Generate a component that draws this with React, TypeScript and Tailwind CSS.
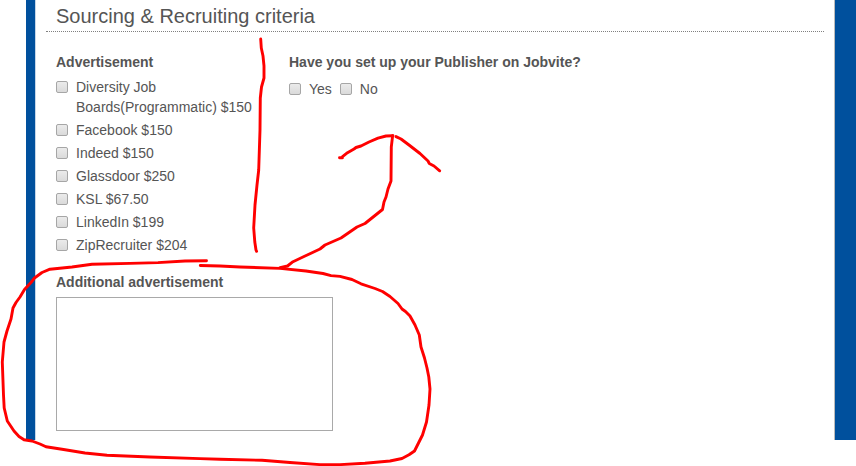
type CheckOptionProps = {
  label: string;
};

const boards = [
  "Diversity Job Boards(Programmatic) $150",
  "Facebook $150",
  "Indeed $150",
  "Glassdoor $250",
  "KSL $67.50",
  "LinkedIn $199",
  "ZipRecruiter $204",
];

const strokes = [
  // divider between the two columns
  "M260.7 39 L261.3 48 L263 56 L264 66 L264 78 L261.5 87 L260.3 98 L260 130 L258.7 170 L257 185 L255 205 L253.7 228 L254.8 242 L256 250 L256.6 251.3",
  // loop around the additional advertisement field
  "M206.5 260.8 L185 261 L158 262.6 L130 263.4 L92 264.3 L72 267 L50 269.2 L42 272.5 L34.5 278 L31 282.5 L24.5 289.5 L20 297 L16 302.5 L13 308 L11 319 L7 331 L4 342 L2.3 362 L3.5 395 L4.2 408 L7.3 421 L14 431 L19 436.5 L24 439.8 L32 441 L40 444 L46 446.8 L62 449.3 L85 453 L107 455.3 L150 457 L200 458.6 L220 459.2 L262 460.3 L290 462.5 L320 464.6 L340 464.6 L365 463.3 L390 461 L402 458.5 L409 454.8 L414.5 451 L418.5 443 L422.5 435 L426.5 422 L429 405 L430 389 L428.8 377 L427 368 L424.5 358 L421 347 L419.3 335 L415 325 L410 316 L405.5 311.5 L402 309 L398 303.5 L390 296.5 L382.5 291.5 L375 288.5 L361 283.8 L352 279.5 L340 276.4 L331 275.6 L323 273.5 L306 271 L280 268.4 L240 267 L220 266 L200.3 265.5",
  // arrow shaft
  "M280 267.7 L287.5 266 L293 261.7 L304 256.5 L320 249 L325 245 L341 238 L357 227 L365 223.5 L382.5 209.5 L384 202 L386 197 L388 189 L391 181 L391.3 147 L392.6 135.8",
  // arrow head
  "M339.5 157.8 L342.5 157.8 L342.5 156.6 L347.5 152.7 L354 149 L356 147.5 L361 146 L369 142 L378 138.2 L386 136 L393 135.8",
  "M396 136.6 L401 139 L409 145 L420 153.5 L428 161 L429.3 163.5 L434 166 L439.7 170.8",
];

const CheckOption = ({ label }: CheckOptionProps) => {
  return (
    <label className="flex items-start gap-2">
      <input
        type="checkbox"
        className="mt-1 h-3 w-3 shrink-0 appearance-none rounded-xs border border-[#a6a6a6] bg-linear-to-b from-[#ebebeb] to-[#dadada]"
      />
      <span>{label}</span>
    </label>
  );
};

const Annotations = () => {
  return (
    <svg
      width="856"
      height="466"
      viewBox="0 0 856 466"
      className="pointer-events-none absolute top-0 left-0"
      fill="none"
      stroke="#ff0000"
      strokeWidth="2.9"
      strokeLinecap="round"
      strokeLinejoin="round"
    >
      {strokes.map((d) => (
        <path key={d} d={d} />
      ))}
    </svg>
  );
};

const App = () => {
  return (
    <div className="relative h-[466px] w-[856px] overflow-hidden bg-white pl-[26px] font-['Liberation_Sans',Arial,sans-serif] text-sm leading-5 text-[#555555]">
      <div className="h-[440px] bg-[#00509d] pr-[21px] pl-[9px]">
        <main className="h-full border-x border-l-[#c5d6e8] border-r-[#bbbbbb] bg-white px-2.5">
          <h2 className="h-8 border-b border-dotted border-[#808080] pt-1 pl-2.5 text-xl leading-6">
            Sourcing &amp; Recruiting criteria
          </h2>

          <div className="flex pt-5 pl-2.5">
            <section className="w-[233px]">
              <h3 className="mb-[5px] font-bold">Advertisement</h3>
              <div className="flex w-[200px] flex-col gap-[3px]">
                {boards.map((board) => (
                  <CheckOption key={board} label={board} />
                ))}
              </div>
            </section>

            <section>
              <h3 className="mb-[7px] font-bold">
                Have you set up your Publisher on Jobvite?
              </h3>
              <div className="flex gap-2">
                <CheckOption label="Yes" />
                <CheckOption label="No" />
              </div>
            </section>
          </div>

          <section className="pt-[17px] pl-2.5">
            <h3 className="mb-[5px] font-bold">Additional advertisement</h3>
            <textarea className="block h-[134px] w-[277px] resize-none border border-[#a9a9a9] bg-white" />
          </section>
        </main>
      </div>

      <Annotations />
    </div>
  );
};

export default App;
